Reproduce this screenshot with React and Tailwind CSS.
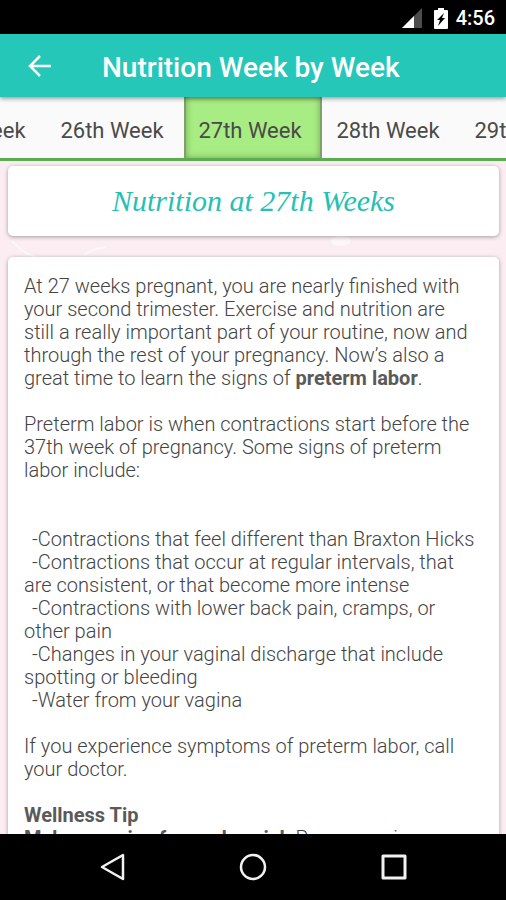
import React, { useState } from "react";

const weeks = ["25th Week", "26th Week", "27th Week", "28th Week", "29th Week"];

const signs = [
  "Contractions that feel different than Braxton Hicks",
  "Contractions that occur at regular intervals, that are consistent, or that become more intense",
  "Contractions with lower back pain, cramps, or other pain",
  "Changes in your vaginal discharge that include spotting or bleeding",
  "Water from your vagina",
];

function StatusBar() {
  return (
    <div className="flex h-[34px] shrink-0 items-center justify-end bg-black pr-[11px] pt-0.5 text-white">
      <svg className="mr-3 h-5 w-5" viewBox="0 0 20 20" fill="currentColor">
        <path d="M20 0V20H0Z" opacity="0.3" />
        <path d="M12 8V20H0Z" />
      </svg>
      <svg className="mr-2 h-[21px] w-[14px]" viewBox="0 0 14 21">
        <path d="M4 0h6v2h3q1 0 1 1v17q0 1-1 1H1q-1 0-1-1V3q0-1 1-1h3Z" fill="#fff" />
        <path d="M10 5 3 12h3L4 18l7-8H8Z" fill="#000" />
      </svg>
      <span className="text-[20px] font-medium leading-6">4:56</span>
    </div>
  );
}

function AppBar() {
  return (
    <header className="relative z-10 flex h-[63px] shrink-0 items-center bg-[#25c7b8] text-white shadow-[0_2px_4px_rgba(0,0,0,0.35)]">
      <button aria-label="Back" className="ml-7 mr-[50px]">
        <svg className="h-6 w-6" viewBox="0 0 24 24" fill="none" stroke="currentColor" strokeWidth="2.5">
          <path d="M23 12H3M12 2 2 12l10 10" />
        </svg>
      </button>
      <h1 className="pt-1 text-[28px] font-medium leading-8">Nutrition Week by Week</h1>
    </header>
  );
}

function WeekTabs({ active, onSelect }) {
  return (
    <nav className="flex h-16 shrink-0 justify-center overflow-hidden border-b-[3px] border-[#5cad4f] bg-[#fafafa]">
      {weeks.map((week) => (
        <button
          key={week}
          onClick={() => onSelect(week)}
          className={`w-[138px] shrink-0 whitespace-nowrap pr-1.5 pt-1.5 text-[22px] text-[#4a4a4a] ${
            week === active
              ? "border-x-2 border-[#7f9f6d] bg-[#a8ec84] shadow-[inset_0_0_6px_rgba(60,90,40,0.5)]"
              : ""
          }`}
        >
          {week}
        </button>
      ))}
    </nav>
  );
}

// faint swirls behind the cards
function Backdrop() {
  return (
    <svg className="absolute left-0 top-0 h-24 w-full" fill="none" stroke="#fff" strokeWidth="2" opacity="0.6">
      <path d="M12 80Q24 94 42 98M84 94Q92 88 106 86" />
      <ellipse cx="341" cy="80" rx="9" ry="4" fill="#fff" />
    </svg>
  );
}

function NavBar() {
  return (
    <div className="flex h-[66px] shrink-0 items-center justify-center gap-[112px] bg-black text-white">
      <button aria-label="Back">
        <svg className="h-7 w-7" viewBox="0 0 28 28" fill="none" stroke="#f2f2f2" strokeWidth="2.5" strokeLinejoin="round">
          <path d="M24 2V26L3 14Z" />
        </svg>
      </button>
      <button aria-label="Home">
        <svg className="h-7 w-7" viewBox="0 0 28 28" fill="none" stroke="#f2f2f2" strokeWidth="2.5">
          <circle cx="14" cy="14" r="12" />
        </svg>
      </button>
      <button aria-label="Recent apps">
        <svg className="h-7 w-7" viewBox="0 0 28 28" fill="none" stroke="#f2f2f2" strokeWidth="3" strokeLinejoin="round">
          <path d="M4 3h22v22h-22Z" />
        </svg>
      </button>
    </div>
  );
}

export default function App() {
  const [active, setActive] = useState("27th Week");

  return (
    <div className="flex h-screen flex-col overflow-hidden bg-[#fbedf2] font-['Roboto',sans-serif]">
      <StatusBar />
      <AppBar />
      <WeekTabs active={active} onSelect={setActive} />

      <main className="relative min-h-0 flex-1 overflow-hidden pl-2 pr-[7px] pt-[5px]">
        <Backdrop />
        <div className="relative rounded-[5px] bg-white py-4 text-center shadow-[0_1px_4px_rgba(0,0,0,0.35)]">
          <h2 className="font-['Gabriola','Liberation_Serif',serif] text-[30px] italic leading-[38px] text-[#25c0b2]">
            Nutrition at 27th Weeks
          </h2>
        </div>

        <article className="relative mt-[21px] rounded-[5px] bg-white pl-4 pr-[22px] pt-[18px] pb-6 text-[20px] font-light leading-[23px] text-[#444] shadow-[0_1px_4px_rgba(0,0,0,0.35)]">
          <p>
            At 27 weeks pregnant, you are nearly finished with your second
            trimester. Exercise and nutrition are still a really important part
            of your routine, now and through the rest of your pregnancy. Now’s
            also a great time to learn the signs of{" "}
            <b className="font-bold text-[#5a5a5a]">preterm labor</b>.
          </p>
          <p className="mt-[23px]">
            Preterm labor is when contractions start before the 37th week of
            pregnancy. Some signs of preterm labor include:
          </p>
          <ul className="mt-[46px]">
            {signs.map((sign) => (
              <li key={sign} className="indent-2">
                -{sign}
              </li>
            ))}
          </ul>
          <p className="mt-[23px]">
            If you experience symptoms of preterm labor, call your doctor.
          </p>
          <h3 className="mt-[23px] font-bold text-[#5a5a5a]">Wellness Tip</h3>
          <p>
            <b className="font-bold text-[#5a5a5a]">Make exercise fun and social.</b>{" "}
            Pregnancy is
          </p>
        </article>
      </main>

      <NavBar />
    </div>
  );
}
